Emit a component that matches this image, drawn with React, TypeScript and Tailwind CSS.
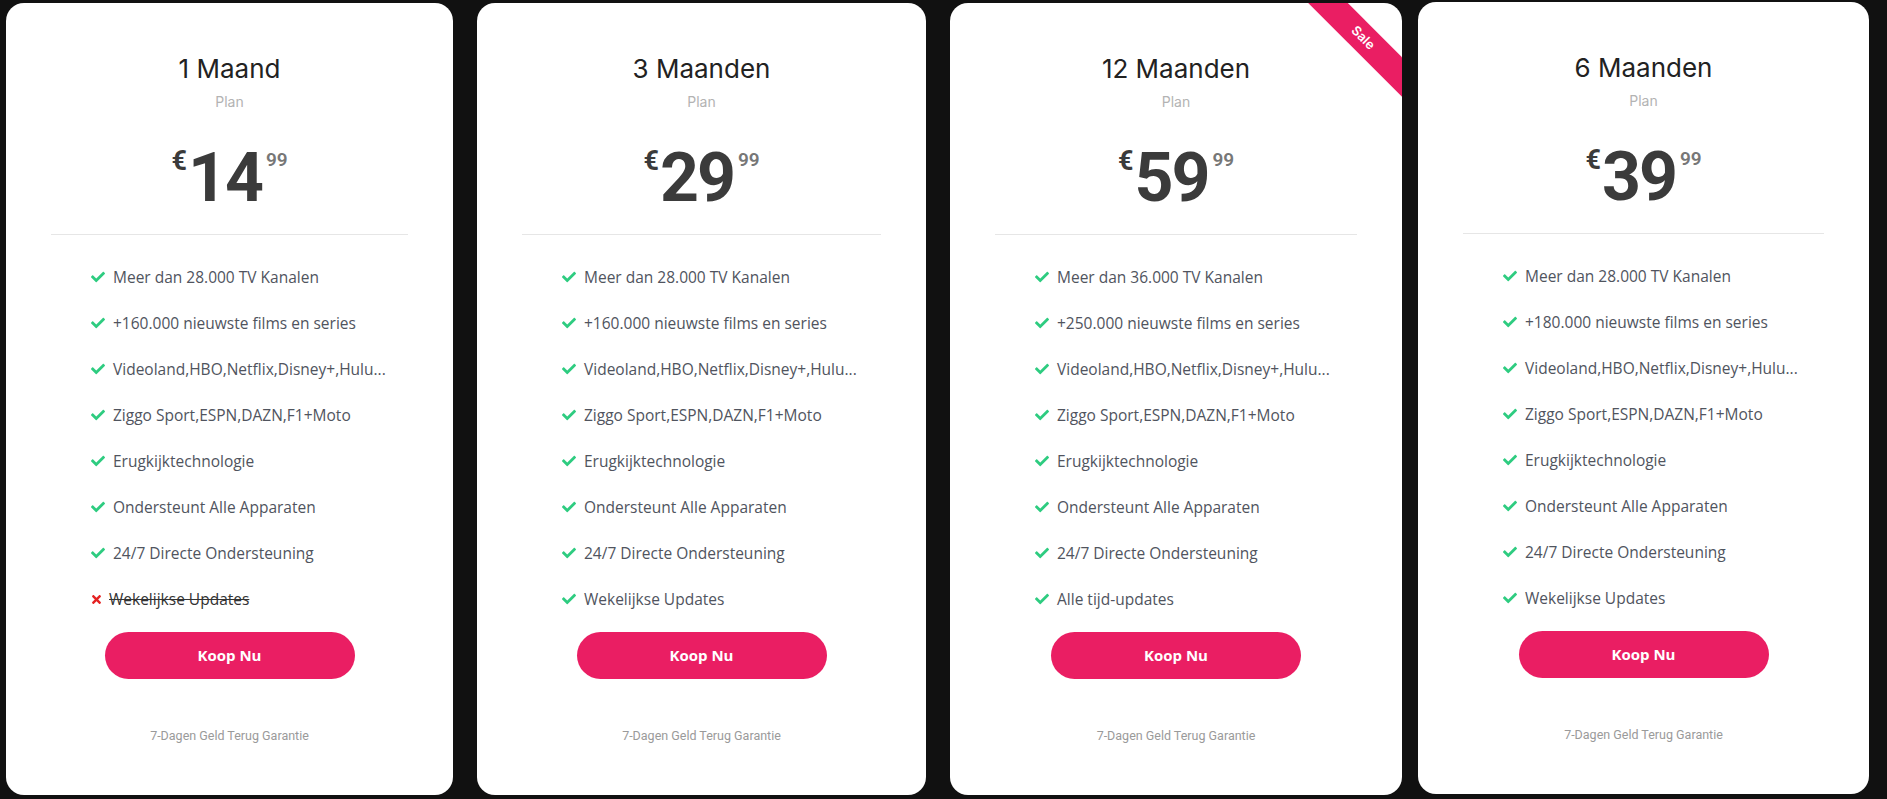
import { FaCheck, FaTimes } from 'react-icons/fa';

interface Feature {
  text: string;
  included: boolean;
}

interface Plan {
  title: string;
  price: string;
  cents: string;
  features: Feature[];
  sale?: boolean;
  cardClass: string;
}

const base = (channels: string, films: string, last: Feature): Feature[] => [
  { text: `Meer dan ${channels} TV Kanalen`, included: true },
  { text: `+${films} nieuwste films en series`, included: true },
  { text: 'Videoland,HBO,Netflix,Disney+,Hulu...', included: true },
  { text: 'Ziggo Sport,ESPN,DAZN,F1+Moto', included: true },
  { text: 'Erugkijktechnologie', included: true },
  { text: 'Ondersteunt Alle Apparaten', included: true },
  { text: '24/7 Directe Ondersteuning', included: true },
  last,
];

const plans: Plan[] = [
  {
    title: '1 Maand',
    price: '14',
    cents: '99',
    features: base('28.000', '160.000', { text: 'Wekelijkse Updates', included: false }),
    cardClass: 'w-[447px] mt-[3px]',
  },
  {
    title: '3 Maanden',
    price: '29',
    cents: '99',
    features: base('28.000', '160.000', { text: 'Wekelijkse Updates', included: true }),
    cardClass: 'w-[449px] ml-[24px] mt-[3px]',
  },
  {
    title: '12 Maanden',
    price: '59',
    cents: '99',
    features: base('36.000', '250.000', { text: 'Alle tijd-updates', included: true }),
    sale: true,
    cardClass: 'w-[452px] ml-[24px] mt-[3px]',
  },
  {
    title: '6 Maanden',
    price: '39',
    cents: '99',
    features: base('28.000', '180.000', { text: 'Wekelijkse Updates', included: true }),
    cardClass: 'w-[451px] ml-[16px] mt-[2px]',
  },
];

const PlanCard = ({ plan }: { plan: Plan }) => (
  <div
    className={`relative overflow-hidden shrink-0 h-[792px] bg-white rounded-[18px] flex flex-col ${plan.cardClass}`}
  >
    {plan.sale && (
      <div className="absolute top-[21px] right-[-41px] w-[160px] h-[28px] rotate-45 bg-[#ea1e63] flex items-center justify-center">
        <span className="text-white text-[13px] font-semibold font-['Inter',sans-serif]">Sale</span>
      </div>
    )}

    <div className="pt-[50px] text-center">
      <h2 className="text-[26px] leading-[31px] font-normal text-[#222222] font-['Inter',sans-serif]">
        {plan.title}
      </h2>
      <p className="mt-[7px] text-[14px] leading-[21px] text-[#b3b3b3] font-['Inter',sans-serif]">Plan</p>
    </div>

    <div className="mt-[32px] flex justify-center items-start text-[#3b3b3b] font-['Roboto',sans-serif] font-bold">
      <span className="text-[27px] leading-none mt-[4px] mr-[1px]">€</span>
      <span className="text-[68px] leading-none tracking-[-2px]">{plan.price}</span>
      <span className="text-[19px] leading-none mt-[6px] ml-[4px] font-semibold text-[#777777]">{plan.cents}</span>
    </div>

    <div className="mt-[22px] mx-[45px] h-px bg-[#e6e6e6]" />

    <ul className="mt-[31px] pl-[85px] flex flex-col gap-[24px] font-['Open_Sans',sans-serif] text-[15.5px]">
      {plan.features.map((f) => (
        <li key={f.text} className="flex items-center leading-[22px]">
          {f.included ? (
            <FaCheck className="w-[14px] h-[14px] text-[#2ecc80] mr-[8px] shrink-0" />
          ) : (
            <FaTimes className="w-[11px] h-[13px] text-[#e52222] mr-[7px] shrink-0" />
          )}
          <span className={f.included ? 'text-[#50545e]' : 'text-[#333333] line-through'}>{f.text}</span>
        </li>
      ))}
    </ul>

    <div className="mt-[22px] flex justify-center">
      <button className="w-[250px] h-[47px] rounded-full bg-[#ea1e63] text-white text-[15px] font-bold font-['Open_Sans',sans-serif]">
        Koop Nu
      </button>
    </div>

    <p className="mt-[48px] text-center text-[12.5px] leading-[18px] text-[#9a9a9a] font-['Roboto',sans-serif]">
      7-Dagen Geld Terug Garantie
    </p>
  </div>
);

export default function App() {
  return (
    <div className="min-h-screen w-full bg-[#111111] flex items-start pl-[6px]">
      {plans.map((p) => (
        <PlanCard key={p.title} plan={p} />
      ))}
    </div>
  );
}
